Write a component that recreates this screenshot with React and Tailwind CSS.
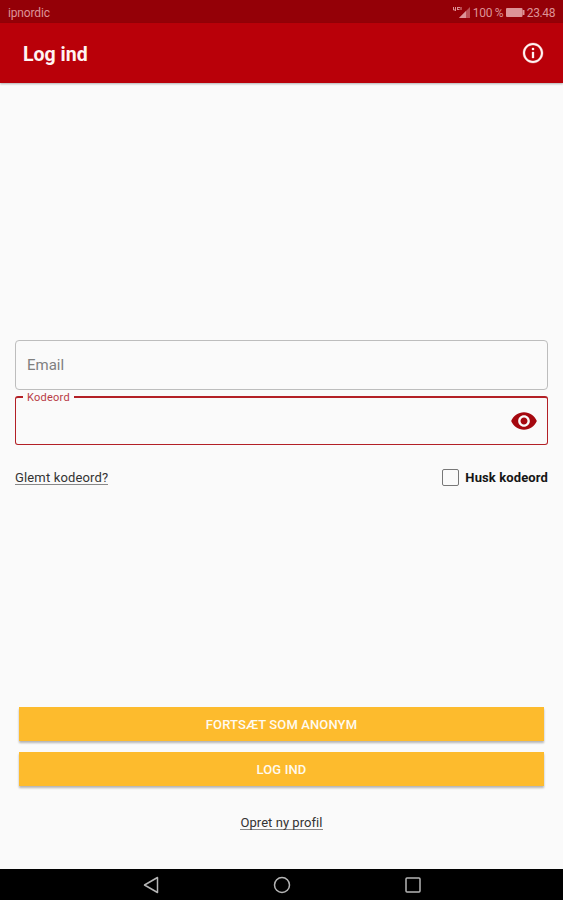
function StatusBar() {
  return (
    <div className="flex h-[23px] shrink-0 items-center justify-between bg-[#940007] pl-2 pr-[8px] pt-[2px] text-[12px] leading-none text-[#dd9397]">
      <span className="tracking-[-0.15px]">ipnordic</span>
      <div className="flex items-center">
        <svg width="19" height="13" viewBox="0 0 19 13" fill="currentColor">
          <path d="M7 12 18 1v11Z" opacity=".55" />
          <path d="M7 12 14 5v7Z" />
          <path d="M1.500 1v3h2M3.500 1v4M5 1.500h3M5 3.500h2.500M5.500 1v3M9 1v3" fill="none" stroke="currentColor" strokeWidth="1" />
        </svg>
        <span className="ml-[2px] w-[30px] whitespace-nowrap tracking-[-0.3px]">100 %</span>
        <svg className="ml-[3px]" width="19" height="9" viewBox="0 0 19 9" fill="currentColor">
          <rect width="16.500" height="9" rx="1" />
          <rect x="16.500" y="2" width="2" height="5" rx=".5" />
        </svg>
        <span className="ml-[2px] tracking-[-0.4px]">23.48</span>
      </div>
    </div>
  );
}

function AppBar() {
  return (
    <header className="z-10 flex h-[60px] shrink-0 items-center justify-between bg-[#b90009] pl-[23px] pr-[18px] text-[#fff3f2] shadow-[0_1px_2px_rgba(0,0,0,0.3)]">
      <h1 className="pt-[3px] text-[19.500px] font-bold leading-none">Log ind</h1>
      <svg width="24" height="24" viewBox="0 0 24 24" fill="currentColor" stroke="currentColor" strokeWidth=".3" aria-label="Info">
        <path d="M11 7h2v2h-2zm0 4h2v6h-2zm1-9C6.480 2 2 6.480 2 12s4.480 10 10 10 10-4.480 10-10S17.520 2 12 2zm0 18c-4.410 0-8-3.590-8-8s3.590-8 8-8 8 3.590 8 8-3.590 8-8 8z" />
      </svg>
    </header>
  );
}

function ActionButton({ children }) {
  return (
    <button className="flex h-[34px] w-full items-center justify-center bg-[#fdbb2d] text-[13px] font-medium leading-none tracking-[0.12px] text-[#fffaf0] shadow-[0_2px_2px_rgba(0,0,0,0.28)]">
      {children}
    </button>
  );
}

function NavigationBar() {
  return (
    <nav className="flex h-[31px] shrink-0 items-center justify-center gap-[114px] bg-black text-[#b5b5b5]">
      <svg width="16" height="18" viewBox="0 0 16 18" fill="none" stroke="currentColor" strokeWidth="1.500" strokeLinejoin="round">
        <path d="M14.500 1.500v15L1.500 9Z" />
      </svg>
      <svg width="18" height="18" viewBox="0 0 18 18" fill="none" stroke="currentColor" strokeWidth="1.500">
        <circle cx="9" cy="9" r="7.500" />
      </svg>
      <svg width="16" height="16" viewBox="0 0 16 16" fill="none" stroke="currentColor" strokeWidth="1.500">
        <rect x="1" y="1" width="14" height="14" rx="1" />
      </svg>
    </nav>
  );
}

export default function App() {
  return (
    <div className="flex h-[900px] w-[563px] flex-col bg-[#fafafa] font-[Roboto,sans-serif]">
      <StatusBar />
      <AppBar />
      <main className="flex flex-1 flex-col px-[15px] pt-[257px]">
        <div className="flex h-[50px] shrink-0 items-center rounded-[4px] border border-[#bdbdbd] pl-[11px] pt-[1px] text-[15px] leading-none text-[#808080]">
          Email
        </div>
        <fieldset className="mt-[6px] h-[49px] shrink-0 rounded-[3px] border border-t-2 border-[#b32026] pl-[7px]">
          <legend className="flex h-[2px] items-center px-[4px] text-[11px] leading-none tracking-[0.25px] text-[#b83a45]">
            Kodeord
          </legend>
          <div className="flex h-[46px] items-center justify-end pr-[9px]">
            <svg width="28" height="28" viewBox="0 0 24 24" fill="#a5080f">
              <path d="M12 4.500C7 4.500 2.730 7.610 1 12c1.730 4.390 6 7.500 11 7.500s9.270-3.110 11-7.500c-1.730-4.390-6-7.500-11-7.500zM12 17c-2.760 0-5-2.240-5-5s2.240-5 5-5 5 2.240 5 5-2.240 5-5 5zm0-8c-1.660 0-3 1.340-3 3s1.340 3 3 3 3-1.340 3-3-1.340-3-3-3z" />
            </svg>
          </div>
        </fieldset>
        <div className="mt-[22px] flex h-5 shrink-0 items-center justify-between text-[13px] leading-none">
          <a className="mt-[2px] border-b border-[#888] tracking-[0.15px] text-[#333]">Glemt kodeord?</a>
          <label className="flex items-center gap-[6px] font-bold tracking-[0.12px] text-[#151515]">
            <span className="h-[17px] w-[17px] rounded-[2px] border-[1.500px] border-[#777]" />
            Husk kodeord
          </label>
        </div>
        <div className="mt-[220px] flex flex-col gap-[11px] px-[4px]">
          <ActionButton>FORTSÆT SOM ANONYM</ActionButton>
          <ActionButton>LOG IND</ActionButton>
        </div>
        <a className="mt-[30px] self-center border-b border-[#888] text-[13px] leading-none tracking-[0.05px] text-[#333]">Opret ny profil</a>
      </main>
      <NavigationBar />
    </div>
  );
}
